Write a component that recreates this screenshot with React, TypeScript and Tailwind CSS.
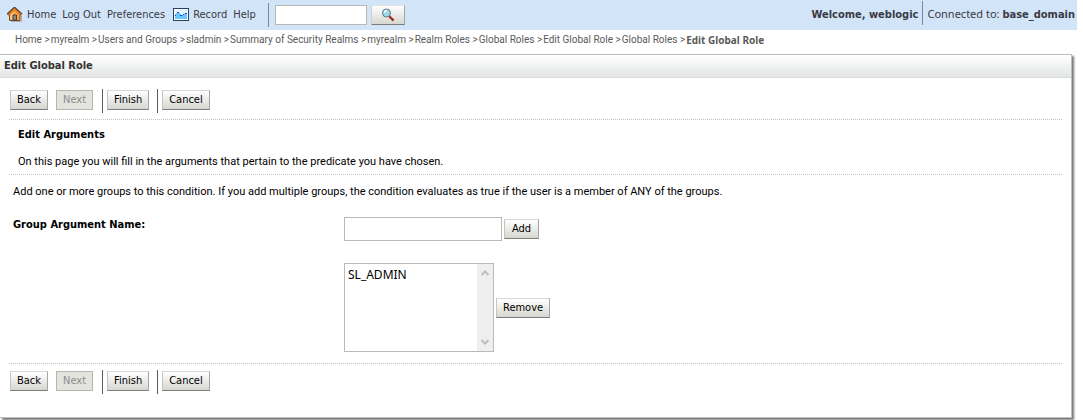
import React from 'react';

const crumbs = [
  'Home',
  'myrealm',
  'Users and Groups',
  'sladmin',
  'Summary of Security Realms',
  'myrealm',
  'Realm Roles',
  'Global Roles',
  'Edit Global Role',
  'Global Roles',
];

const groups = ['SL_ADMIN'];

function HomeIcon() {
  return (
    <svg width="16" height="16" viewBox="0 0 16 16" aria-hidden="true">
      <path d="M4 14.500h10.500V8.500" fill="none" stroke="#a9b0b6" />
      <path d="M2.500 7.500v6h10.500v-6L7.500 2z" fill="#f9a03a" stroke="#7a4a20" />
      <path d="M3.500 8v4.500h2V8l2-3L5.500 6z" fill="#ffd08a" />
      <path d="M0.500 7.500 7.500 1l7 6.500" fill="none" stroke="#5a3f2c" strokeWidth="2.400" />
      <path d="M1.500 7.500 7.500 2l6 5.500" fill="none" stroke="#f58220" strokeWidth="1.500" />
      <path d="M6 13V8h3.500v5z" fill="#8c8c8c" stroke="#4a4038" />
    </svg>
  );
}

function RecordIcon() {
  return (
    <svg width="16" height="13" viewBox="0 0 16 13" aria-hidden="true">
      <rect x="0.5" y="0.5" width="15" height="12" fill="#fff" stroke="#27435f" />
      <rect x="2" y="2" width="12" height="9" fill="#e2f3ff" />
      <path d="M2 8l3-3 3 3h2l2-2h2v5H2z" fill="#66ccff" />
      <path d="M2 7.500l3-3 3 3h2l2-2h2" fill="none" stroke="#3f8fe0" />
      <path d="M2 7h1v1H2zM4 4h2v1H4zM7 7h2v1H7zM10 6h1v1h-1zM12 5h2v1h-2z" fill="#1450d8" />
    </svg>
  );
}

function SearchIcon() {
  return (
    <svg width="14" height="14" viewBox="0 0 14 14" aria-hidden="true">
      <path d="M8 8l4.500 4.500" stroke="#8c1a14" strokeWidth="2.400" />
      <path d="M8.500 8l3.500 3.500" stroke="#e0483a" />
      <circle cx="5.500" cy="5" r="4" fill="#9bd8e8" stroke="#607884" />
      <path d="M3.500 5a2.500 2.500 0 0 1 2.500-2.500" fill="none" stroke="#e8f8ff" strokeWidth="1.500" />
    </svg>
  );
}

function Button({ children, disabled = false }: { children: React.ReactNode; disabled?: boolean }) {
  return (
    <button
      type="button"
      disabled={disabled}
      className="h-5 min-w-[35px] border border-t-[#d6d7d2] border-l-[#c4c5c0] border-r-[#a5a6a2] border-b-[#7d7e7a] bg-linear-to-b from-white to-[#d6d7d0] px-1.5 leading-4 text-black disabled:border-[#b5b6b0] disabled:bg-none disabled:bg-[#e3e4de] disabled:text-[#8b8c88]"
    >
      {children}
    </button>
  );
}

function WizardButtons() {
  return (
    <div className="flex items-start">
      <div className="flex gap-2 pt-px pr-[9px] pl-px">
        <Button>Back</Button>
        <Button disabled>Next</Button>
      </div>
      <div className="h-6 border-l border-[#5c5c5c] pt-px pr-2 pl-1">
        <Button>Finish</Button>
      </div>
      <div className="h-6 border-l border-[#5c5c5c] pt-px pl-1">
        <Button>Cancel</Button>
      </div>
    </div>
  );
}

export default function App() {
  return (
    <div className="bg-white pb-1 font-['DejaVu_Sans_Condensed',sans-serif] text-[11px] leading-4 text-black">
      <header className="mr-1.5 flex h-[30px] justify-between bg-[#d2e4f8] text-[#3a3a44]">
        <div className="flex items-center">
          <nav className="flex items-center pb-px pl-[7px]">
            <a href="#home" className="flex items-center gap-1">
              <HomeIcon />
              Home
            </a>
            <a href="#logout" className="ml-1.5">Log Out</a>
            <a href="#preferences" className="ml-1.5">Preferences</a>
            <a href="#record" className="ml-2 flex items-center gap-1">
              <RecordIcon />
              Record
            </a>
            <a href="#help" className="ml-1.5">Help</a>
          </nav>
          <form className="ml-3 flex h-6 items-center border-l border-[#7b8796] pl-1.5">
            <input type="text" aria-label="Search" className="h-5 w-[92px] border border-[#b9b9b1] bg-white px-1" />
            <button
              type="button"
              aria-label="Search"
              className="ml-1 flex h-5 w-[34px] items-center justify-center border border-t-[#e4e4e0] border-l-[#d0d0cc] border-r-[#a5a6a2] border-b-[#7d7e7a] bg-linear-to-b from-white to-[#d6d7d0]"
            >
              <SearchIcon />
            </button>
          </form>
        </div>
        <div className="flex items-start pt-px pr-0.5">
          <span className="pt-1.5 pr-1 font-bold">Welcome, weblogic</span>
          <span className="h-6 border-l border-[#7b8796] pt-[5px] pl-1">
            <span className="font-['Noto_Sans',sans-serif]">Connected to: </span>
            <b>base_domain</b>
          </span>
        </div>
      </header>

      <nav aria-label="Breadcrumb" className="flex h-6 items-center pb-1 pl-[15px] font-['Roboto',sans-serif] text-[10px] whitespace-pre text-[#5a5a5a]">
        {crumbs.map((crumb, idx) => (
          <span key={idx} className="pr-px">
            <a href="#crumb">{crumb}</a>
            {' >'}
          </span>
        ))}
        <b className="font-['Noto_Sans',sans-serif]">Edit Global Role</b>
      </nav>

      <main className="mr-[11px] border border-l-0 border-[#b9c0c4] shadow-[2px_2px_2px_#777]">
        <h1 className="h-[23px] border-b border-[#d9dcdb] bg-linear-to-b from-white to-[#e3e6e5] pt-[3px] pl-1 font-bold text-[#333]">
          Edit Global Role
        </h1>

        <div className="pt-[11px] pr-[9px] pb-[23px] pl-[9px]">
          <WizardButtons />

          <section className="mt-1.5 border-y border-dotted border-[#c4c4c4] pt-[7px] pb-1 pl-[9px]">
            <h2 className="font-bold">Edit Arguments</h2>
            <p className="mt-[11px] font-['Roboto',sans-serif]">On this page you will fill in the arguments that pertain to the predicate you have chosen.</p>
          </section>

          <section className="border-b border-dotted border-[#c4c4c4] pt-[9px] pb-[11px] pl-1">
            <p className="font-['Roboto',sans-serif]">Add one or more groups to this condition. If you add multiple groups, the condition evaluates as true if the user is a member of ANY of the groups.</p>
            <div className="mt-[17px] flex items-start">
              <label htmlFor="group-name" className="w-[331px] font-bold">Group Argument Name:</label>
              <div>
                <div className="flex items-center gap-0.5">
                  <input id="group-name" type="text" className="h-6 w-[158px] border border-[#b9b9b5] px-1" />
                  <Button>Add</Button>
                </div>
                <div className="mt-[22px] flex items-center gap-0.5">
                  <div className="flex h-[89px] w-[150px] border border-[#b9b9b5]">
                    <select multiple aria-label="Groups" className="flex-1 overflow-hidden pt-0.5 font-['Noto_Sans',sans-serif]">
                      {groups.map(group => (
                        <option key={group} className="p-0 pl-[3px] text-xs leading-4">{group}</option>
                      ))}
                    </select>
                    <div className="flex w-4 flex-col items-center justify-between bg-[#efefef] py-1.5">
                      <svg width="8" height="6" viewBox="0 0 8 6" aria-hidden="true">
                        <path d="M0.500 5 4 1.500 7.500 5" fill="none" stroke="#bdbdbd" strokeWidth="2" />
                      </svg>
                      <svg width="8" height="6" viewBox="0 0 8 6" aria-hidden="true">
                        <path d="M0.500 1 4 4.500 7.500 1" fill="none" stroke="#bdbdbd" strokeWidth="2" />
                      </svg>
                    </div>
                  </div>
                  <Button>Remove</Button>
                </div>
              </div>
            </div>
          </section>

          <div className="pt-1.5">
            <WizardButtons />
          </div>
        </div>
      </main>
    </div>
  );
}
